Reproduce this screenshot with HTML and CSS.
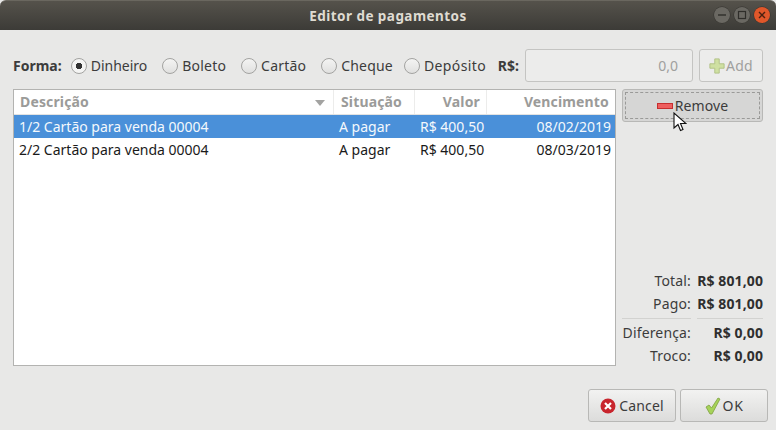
FILE: index.html
```html
<!DOCTYPE html>
<html lang="pt">
<head>
<meta charset="utf-8">
<title>Editor de pagamentos</title>
<link rel="stylesheet" href="styles.css">
</head>
<body>
<div class="window">
  <header class="titlebar">
    <span class="title">Editor de pagamentos</span>
    <div class="wm">
      <span class="wm-btn"><svg viewBox="0 0 16 16" width="16" height="16"><path d="M4 8h8" stroke="#2f2e2a" stroke-width="1.4"/></svg></span>
      <span class="wm-btn"><svg viewBox="0 0 16 16" width="16" height="16"><rect x="4.5" y="4.5" width="7" height="7" fill="none" stroke="#2f2e2a" stroke-width="1.2"/></svg></span>
      <span class="wm-btn wm-close"><svg viewBox="0 0 16 16" width="16" height="16"><path d="M5 5l6 6M11 5l-6 6" stroke="#4a2010" stroke-width="1.4"/></svg></span>
    </div>
  </header>
  <main class="content">
    <div class="toolbar">
      <b class="lbl">Forma:</b>
      <label class="radio on"><i></i>Dinheiro</label>
      <label class="radio"><i></i>Boleto</label>
      <label class="radio"><i></i>Cartão</label>
      <label class="radio chq"><i></i>Cheque</label>
      <label class="radio dep"><i></i>Depósito</label>
      <b class="lbl rs">R$:</b>
      <div class="entry">0,0</div>
      <div class="btn add">
        <svg viewBox="0 0 18 18" width="16" height="16"><path d="M6.500 1h5v5.500H17v5h-5.500V17h-5v-5.500H1v-5h5.500z" fill="#cfe0a2" stroke="#aebf82"/></svg>Add
      </div>
    </div>
    <div class="middle">
      <div class="table">
        <div class="row head">
          <div class="c desc">Descrição<svg class="sort" viewBox="0 0 10 6" width="10" height="6"><path d="M0 0h10L5 6z" fill="#a3a3a1"/></svg></div>
          <div class="c sit">Situação</div>
          <div class="c val r">Valor</div>
          <div class="c venc r">Vencimento</div>
        </div>
        <div class="row sel">
          <div class="c desc">1/2 Cartão para venda 00004</div>
          <div class="c sit">A pagar</div>
          <div class="c val r">R$ 400,50</div>
          <div class="c venc r">08/02/2019</div>
        </div>
        <div class="row">
          <div class="c desc">2/2 Cartão para venda 00004</div>
          <div class="c sit">A pagar</div>
          <div class="c val r">R$ 400,50</div>
          <div class="c venc r">08/03/2019</div>
        </div>
      </div>
      <aside class="side">
        <div class="btn remove">
          <span class="focus"><svg viewBox="0 0 16 6" width="16" height="6"><rect x=".5" y=".5" width="15" height="5" fill="#ee5f5f" stroke="#c62f2f"/></svg>Remove</span>
          <svg class="cursor" viewBox="0 0 14 20" width="14" height="20"><path d="M1 1v15l4-3.500 2.500 6 2.500-1-2.500-6H13z" fill="#fff" stroke="#111" stroke-width="1.100"/></svg>
        </div>
        <div class="totals">
          <span class="k">Total:</span><b>R$ 801,00</b>
          <span class="k">Pago:</span><b>R$ 801,00</b>
          <hr><hr>
          <span class="k">Diferença:</span><b>R$ 0,00</b>
          <span class="k">Troco:</span><b>R$ 0,00</b>
        </div>
      </aside>
    </div>
    <footer class="actions">
      <div class="btn act">
        <svg viewBox="0 0 16 16" width="16" height="16"><circle cx="8" cy="8" r="7.500" fill="#c8252d"/><path d="M5 5l6 6M11 5l-6 6" stroke="#fff" stroke-width="2.200"/></svg>Cancel
      </div>
      <div class="btn act">
        <svg viewBox="0 0 16 18" width="16" height="18"><path d="M1 10l3-2 2.500 3L13 1l2 1-8 15H5z" fill="#a6d35a" stroke="#7fa040" stroke-width=".8"/></svg>OK
      </div>
    </footer>
  </main>
</div>
</body>
</html>
```
FILE: styles.css
```css
* { box-sizing: border-box; }
html, body { margin: 0; height: 100%; background: #e8e8e7; }
body { font: 14px/18px "Noto Sans", sans-serif; color: #3c3c3c; overflow: hidden; }
.window { width: 776px; height: 430px; display: flex; flex-direction: column; }
.titlebar {
  height: 30px; flex: none; display: flex; align-items: center; justify-content: center; position: relative;
  background: linear-gradient(#55524b, #3c3b37); border-radius: 6px 6px 0 0; border-top: 1px solid #6a675f;
}
.title { color: #dfdbd2; font-weight: 700; font-size: 13.500px; letter-spacing: .45px; }
.wm { position: absolute; right: 6px; top: 6px; display: flex; gap: 4px; }
.wm-btn {
  width: 16px; height: 16px; border-radius: 50%; background: #6a6862; display: block;
  box-shadow: 0 0 0 .5px #34332f;
}
.wm-btn svg { display: block; }
.wm-close { background: #e0572a; }
.content { flex: 1; min-height: 0; padding: 19px 13px 8px; display: flex; flex-direction: column; }
.toolbar { display: flex; align-items: center; height: 33px; flex: none; }
.lbl { font-weight: 700; color: #3c3c3c; flex: none; }
.radio { display: flex; flex: none; align-items: center; gap: 4px; margin-right: 15px; letter-spacing: .2px; }
.lbl + .radio { margin-left: 9px; margin-right: 15px; letter-spacing: 0; }
.chq { margin-right: 11px; }
.dep { margin-right: 0; letter-spacing: .4px; }
.radio i {
  width: 16px; height: 16px; border-radius: 50%; border: 1px solid #a3a3a1; display: block;
  background: linear-gradient(#f4f4f3, #e0e0df);
}
.radio.on i { background: radial-gradient(circle, #333 0 3px, #f4f4f3 3.500px); }
.rs { margin-left: auto; }
.entry {
  flex: none; width: 168px; height: 33px; margin-left: 6px; border: 1px solid #c4c4c2; border-radius: 3px;
  background: #ececeb; color: #a0a09e; text-align: right; padding: 7px 14px 0 0;
}
.btn {
  display: flex; align-items: center; justify-content: center; border: 1px solid #b8b8b6; border-radius: 3px;
  background: linear-gradient(#f2f2f1, #dcdcdb);
}
.add {
  flex: none; width: 64px; height: 33px; margin-left: 6px; background: #ececeb; border-color: #c4c4c2; color: #a0a09e;
  gap: 1px; letter-spacing: .2px;
}
.middle { flex: 1; min-height: 0; display: flex; gap: 6px; margin-top: 7px; }
.table { width: 603px; height: 277px; border: 1px solid #b3b3b1; background: #fff; }
.row { display: flex; height: 23px; color: #1a1a1a; align-items: stretch; }
.row.head { height: 25px; color: #9b9b99; font-weight: 700; border-bottom: 1px solid #e3e3e2; letter-spacing: .15px; }
.row.sel { background: #4a90d9; color: #f4f8fc; }
.c { padding: 3px 5px 0 5px; white-space: nowrap; }
.head .c { padding: 3px 6px 0 6px; border-right: 1px solid #ececeb; }
.head .c:last-child { border-right: 0; }
.desc { width: 320px; position: relative; }
.sit { width: 81px; }
.val { width: 72px; padding-right: 7px; }
.venc { flex: 1; padding-right: 4px; }
.head .sit { padding-left: 7px; }
.r { text-align: right; }
.sort { position: absolute; right: 8px; top: 10px; }
.side { width: 141px; display: flex; flex-direction: column; }
.remove { height: 33px; padding: 2px; background: #d6d6d5; position: relative; flex: none; color: #3c3c3c; }
.focus {
  flex: 1; align-self: stretch; border: 1px dashed #9a9a98; display: flex; align-items: center; justify-content: center;
  gap: 2px; letter-spacing: .1px;
}
.cursor { position: absolute; left: 50px; top: 22px; }
.totals {
  margin-top: auto; display: grid; grid-template-columns: 69px 1fr; column-gap: 6px; row-gap: 5px;
  padding-bottom: 1px;
}
.totals .k { text-align: right; letter-spacing: .15px; }
.totals b { text-align: right; color: #2f2f2f; letter-spacing: .1px; }
.totals hr { border: 0; border-top: 1px solid #d2d2d0; margin: 0; height: 1px; }
.actions { display: flex; justify-content: flex-end; gap: 4px; margin: 23px -5px 0 0; flex: none; }
.act { width: 88px; height: 33px; gap: 3px; letter-spacing: .15px; }
.act:last-child { letter-spacing: .6px; gap: 2px; }
```
